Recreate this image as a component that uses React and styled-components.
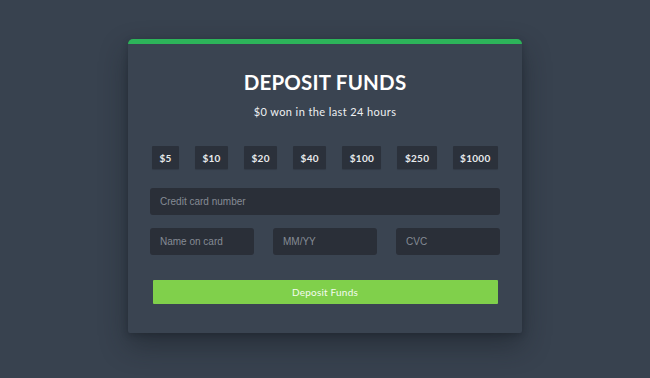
import React from "react";
import styled, { createGlobalStyle } from "styled-components";

const Global = createGlobalStyle`
  html, body { margin: 0; padding: 0; background: #38424f; }
  body { font-family: Lato, "Open Sans", sans-serif; }
  * { box-sizing: border-box; }
`;

const Page = styled.div`
  width: 650px;
  height: 378px;
  background: #38424f;
  display: flex;
  justify-content: center;
  padding-top: 39px;
`;

const Card = styled.div`
  width: 394px;
  height: 294px;
  background: #3a4451;
  border-top: 5px solid #2db45a;
  border-radius: 5px 5px 2px 2px;
  box-shadow: 0 12px 28px rgba(20, 25, 32, 0.45), 0 2px 6px rgba(20, 25, 32, 0.3);
  padding: 26px 22px 0;
  display: flex;
  flex-direction: column;
`;

const Title = styled.h1`
  margin: 0;
  font-size: 20.5px;
  line-height: 25px;
  font-weight: 700;
  color: #ffffff;
  text-align: center;
  letter-spacing: 0.2px;
`;

const Subtitle = styled.p`
  margin: 9px 0 0;
  font-size: 11px;
  line-height: 16px;
  color: #eef0f2;
  text-align: center;
  letter-spacing: 0.4px;
`;

const Amounts = styled.div`
  margin-top: 26px;
  display: flex;
  justify-content: center;
  gap: 16px;
`;

const Amount = styled.button`
  height: 23px;
  padding: 0 7.4px;
  border: none;
  border-radius: 1px;
  background: #2b313b;
  color: #e8eaec;
  font-family: Lato, sans-serif;
  font-size: 10px;
  font-weight: 700;
  letter-spacing: 0.3px;
  box-shadow: 0 1px 1px rgba(0, 0, 0, 0.15);
`;

const Field = styled.input`
  width: ${(p) => p.$w || "100%"};
  height: 27px;
  border: none;
  border-radius: 3px;
  background: #2a2f38;
  padding: 0 10px;
  font-family: "Liberation Sans", Arial, sans-serif;
  font-size: 10px;
  color: #e0e2e5;
  outline: none;
  &::placeholder { color: #858b95; }
`;

const Stack = styled.div`
  margin-top: 19px;
  display: flex;
  flex-direction: column;
  gap: 13px;
`;

const Row = styled.div`
  display: flex;
  justify-content: space-between;
`;

const Submit = styled.button`
  margin: 25px auto 0;
  width: 345px;
  height: 24px;
  border: none;
  border-radius: 1px;
  background: #80d04b;
  color: #f4fbef;
  font-family: Lato, sans-serif;
  font-size: 10px;
  letter-spacing: 0.2px;
`;

const amounts = ["$5", "$10", "$20", "$40", "$100", "$250", "$1000"];

export default function App() {
  return (
    <>
      <Global />
      <Page>
        <Card>
          <Title>DEPOSIT FUNDS</Title>
          <Subtitle>$0 won in the last 24 hours</Subtitle>
          <Amounts>
            {amounts.map((a) => (
              <Amount key={a}>{a}</Amount>
            ))}
          </Amounts>
          <Stack>
            <Field placeholder="Credit card number" />
            <Row>
              <Field $w="104px" placeholder="Name on card" />
              <Field $w="104px" placeholder="MM/YY" />
              <Field $w="104px" placeholder="CVC" />
            </Row>
          </Stack>
          <Submit>Deposit Funds</Submit>
        </Card>
      </Page>
    </>
  );
}
